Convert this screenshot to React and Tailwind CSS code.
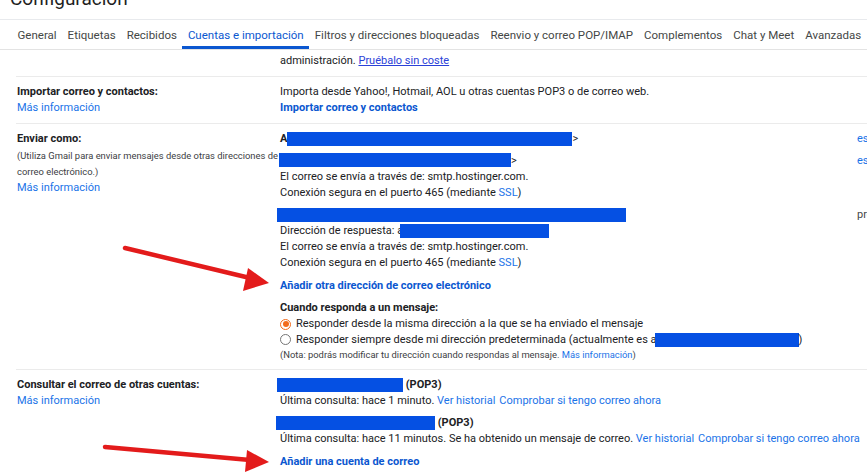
const tabs = [
  'General',
  'Etiquetas',
  'Recibidos',
  'Cuentas e importación',
  'Filtros y direcciones bloqueadas',
  'Reenvio y correo POP/IMAP',
  'Complementos',
  'Chat y Meet',
  'Avanzadas',
];

const Redact = ({ className = '' }) => (
  <span className={`inline-block h-[14px] bg-[#0550e3] align-middle ${className}`} />
);

const Link = ({ children, className = '' }) => (
  <span className={`text-[#1a73e8] cursor-pointer ${className}`}>{children}</span>
);

// red annotation arrows drawn over the page
const Arrows = () => (
  <svg className="absolute left-0 top-0 pointer-events-none" width="867" height="475" viewBox="0 0 867 475">
    <line x1="125" y1="248" x2="250" y2="278" stroke="#e31b1b" strokeWidth="4.5" strokeLinecap="round" />
    <polygon points="248,268 243,291 269,283" fill="#e31b1b" />
    <line x1="105" y1="447" x2="250" y2="460" stroke="#e31b1b" strokeWidth="4.5" strokeLinecap="round" />
    <polygon points="247,450 245,472 269,462" fill="#e31b1b" />
  </svg>
);

export default function App() {
  return (
    <div className="relative w-[867px] h-[475px] overflow-hidden bg-white text-[#202124] text-[11px] leading-[16px] [font-family:Roboto,'Liberation_Sans',sans-serif]">
      {/* title, mostly scrolled out of view */}
      <div className="h-[20px] overflow-hidden border-b border-[#e8eaed]">
        <div className="-mt-[13px] pl-[10px] text-[19px] leading-[24px] text-[#1f1f1f]">Configuración</div>
      </div>

      {/* tabs */}
      <div className="flex h-[30px] pl-[12px] border-b border-[#e3e3e3] whitespace-nowrap">
        {tabs.map((t) => {
          const active = t === 'Cuentas e importación';
          return (
            <div
              key={t}
              className={`flex items-center px-[5.5px] pt-[3px] border-b-[3px] text-[11.5px] ${
                active ? 'border-[#0b57d0] text-[#0b57d0]' : 'border-transparent text-[#444746]'
              }`}
            >
              {t}
            </div>
          );
        })}
      </div>

      {/* cut-off row */}
      <div className="h-[26px] pl-[280px] pt-[3px]">
        administración. <span className="text-[#2a41d8] underline">Pruébalo sin coste</span>
      </div>

      {/* importar */}
      <div className="ml-[16px] border-t border-[#ebebeb] flex pl-[1px] pt-[7px] pb-[7px]">
        <div className="w-[263px]">
          <div className="font-bold">Importar correo y contactos:</div>
          <Link>Más información</Link>
        </div>
        <div className="w-[577px]">
          <div>Importa desde Yahoo!, Hotmail, AOL u otras cuentas POP3 o de correo web.</div>
          <div className="font-bold text-[#0b57d0]">Importar correo y contactos</div>
        </div>
      </div>

      {/* enviar como */}
      <div className="ml-[16px] border-t border-[#ebebeb] flex pl-[1px] pt-[7px] pb-[7px]">
        <div className="w-[263px] shrink-0">
          <div className="font-bold">Enviar como:</div>
          <div className="text-[9.4px] text-[#3c4043] whitespace-nowrap mt-[1px]">
            (Utiliza Gmail para enviar mensajes desde otras direcciones de
            <br />
            correo electrónico.)
          </div>
          <Link>Más información</Link>
        </div>
        <div className="shrink-0">
          <div className="flex mb-[6px]">
            <div className="w-[577px] whitespace-nowrap">
              <span className="font-bold">A</span>
              <Redact className="w-[285px]" />
              &gt;
            </div>
            <Link className="whitespace-nowrap">establecer como predeterminada</Link>
          </div>
          <div className="flex mb-[6px]">
            <div className="w-[577px] whitespace-nowrap">
              <div className="-ml-[1px]">
                <Redact className="w-[232px] -mt-[2px]" />
                &gt;
              </div>
              <div>El correo se envía a través de: smtp.hostinger.com.</div>
              <div>
                Conexión segura en el puerto 465 (mediante <Link>SSL</Link>)
              </div>
            </div>
            <Link className="whitespace-nowrap">establecer como predeterminada</Link>
          </div>
          <div className="flex mb-[7px]">
            <div className="w-[577px] whitespace-nowrap">
              <div className="-ml-[3px]">
                <Redact className="w-[349px]" />
              </div>
              <div>
                Dirección de respuesta: a<Redact className="w-[149px] -ml-[3px]" />
              </div>
              <div>El correo se envía a través de: smtp.hostinger.com.</div>
              <div>
                Conexión segura en el puerto 465 (mediante <Link>SSL</Link>)
              </div>
            </div>
            <span className="whitespace-nowrap text-[#444746]">predeterminada</span>
          </div>
          <div className="font-bold text-[#0b57d0] mb-[6px]">Añadir otra dirección de correo electrónico</div>
          <div className="font-bold">Cuando responda a un mensaje:</div>
          <div className="flex items-center h-[16px]">
            <span className="w-[11px] h-[11px] mr-[5px] rounded-full border border-[#f26b1d] flex items-center justify-center">
              <span className="w-[6px] h-[6px] rounded-full bg-[#f26b1d]" />
            </span>
            Responder desde la misma dirección a la que se ha enviado el mensaje
          </div>
          <div className="flex items-center whitespace-nowrap h-[15px]">
            <span className="w-[11px] h-[11px] mr-[5px] rounded-full border border-[#757575]" />
            Responder siempre desde mi dirección predeterminada (actualmente es a
            <Redact className="w-[144px] -ml-[2px]" />)
          </div>
          <div className="text-[9.4px] leading-[15px] text-[#3c4043]">
            (Nota: podrás modificar tu dirección cuando respondas al mensaje. <Link>Más información</Link>)
          </div>
        </div>
      </div>

      {/* consultar */}
      <div className="ml-[16px] border-t border-[#ebebeb] flex pl-[1px] pt-[7px]">
        <div className="w-[263px] shrink-0">
          <div className="font-bold">Consultar el correo de otras cuentas:</div>
          <Link>Más información</Link>
        </div>
        <div className="whitespace-nowrap">
          <div className="-ml-[3px]">
            <Redact className="w-[126px]" /> <span className="font-bold">(POP3)</span>
          </div>
          <div className="mb-[6px]">
            Última consulta: hace 1 minuto. <Link>Ver historial</Link>
            <Link className="ml-[4px]">Comprobar si tengo correo ahora</Link>
          </div>
          <div className="-ml-[4px]">
            <Redact className="w-[159px]" /> <span className="font-bold">(POP3)</span>
          </div>
          <div className="mb-[7px]">
            Última consulta: hace 11 minutos. Se ha obtenido un mensaje de correo. <Link>Ver historial</Link>
            <Link className="ml-[4px]">Comprobar si tengo correo ahora</Link>
          </div>
          <div className="font-bold text-[#0b57d0]">Añadir una cuenta de correo</div>
        </div>
      </div>

      <Arrows />
    </div>
  );
}
